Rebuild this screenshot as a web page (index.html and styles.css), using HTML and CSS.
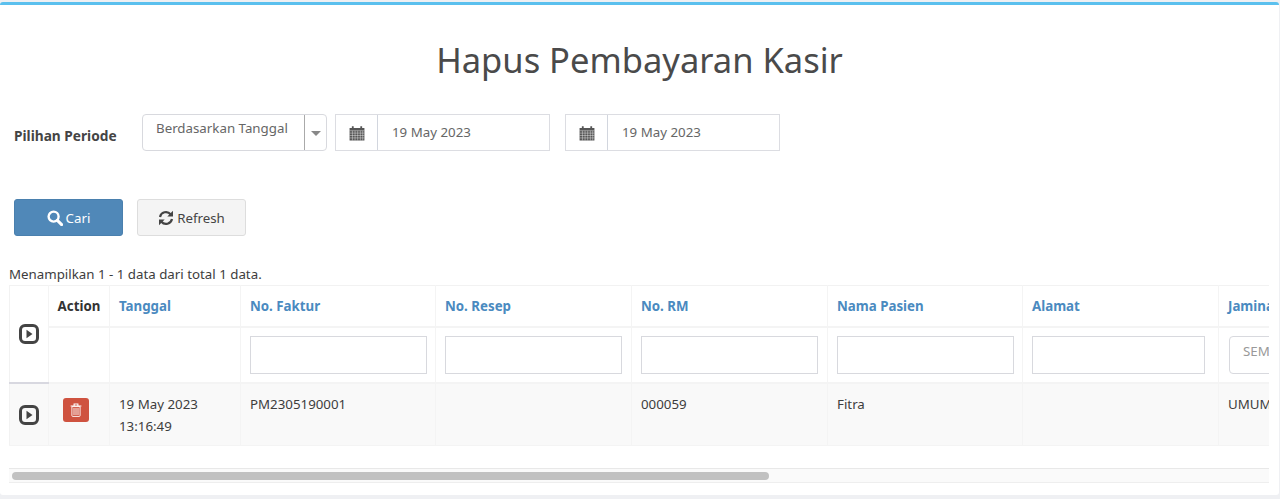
FILE: index.html
```html
<!DOCTYPE html>
<html lang="en">
<head>
  <meta charset="UTF-8" />
  <title>Hapus Pembayaran Kasir</title>
  <link rel="stylesheet" href="styles.css">
</head>
<body>
  <div class="box">
    <h1>Hapus Pembayaran Kasir</h1>

    <div class="filter-row">
      <label class="filter-label">Pilihan Periode</label>
      <div class="select-box">
        <span class="select-text">Berdasarkan Tanggal</span>
        <span class="select-arrow"><i class="caret"></i></span>
      </div>
      <div class="date-group">
        <span class="date-addon">
          <svg class="cal" viewBox="0 0 14 14"><path fill="#555" d="M.5 2.600h2V1h1.600v1.600h5.800V1h1.600v1.600h2v10.900H.5z"/><path stroke="#fff" stroke-width=".35" fill="none" d="M.5 5h13M.5 7.100h13M.5 9.200h13M.5 11.300h13M3 5v8.500M5.300 5v8.500M7.600 5v8.500M9.900 5v8.500M12 5v8.500"/></svg>
        </span>
        <span class="date-value">19 May 2023</span>
      </div>
      <div class="date-group">
        <span class="date-addon">
          <svg class="cal" viewBox="0 0 14 14"><path fill="#555" d="M.5 2.600h2V1h1.600v1.600h5.800V1h1.600v1.600h2v10.900H.5z"/><path stroke="#fff" stroke-width=".35" fill="none" d="M.5 5h13M.5 7.100h13M.5 9.200h13M.5 11.300h13M3 5v8.500M5.300 5v8.500M7.600 5v8.500M9.900 5v8.500M12 5v8.500"/></svg>
        </span>
        <span class="date-value">19 May 2023</span>
      </div>
    </div>

    <div class="button-row">
      <button class="btn btn-primary">
        <svg class="btn-icon" viewBox="0 0 16 16"><circle cx="6.600" cy="6.600" r="5" fill="none" stroke="#fff" stroke-width="2.400"/><path d="M10.400 10.400l4.200 4.200" stroke="#fff" stroke-width="3" stroke-linecap="round"/></svg>
        Cari
      </button>
      <button class="btn btn-default">
        <svg class="btn-icon" viewBox="0 0 16 16"><path fill="none" stroke="#444" stroke-width="2.200" d="M2 7A6.100 6.100 0 0 1 12.600 4.200M14 9A6.100 6.100 0 0 1 3.400 11.800"/><path fill="#444" d="M15 .8v5.700H9.300zM1 15.200V9.500h5.700z"/></svg>
        Refresh
      </button>
    </div>

    <p class="summary">Menampilkan 1 - 1 data dari total 1 data.</p>

    <div class="grid-wrap">
      <table class="grid">
        <colgroup>
          <col class="c-exp"><col class="c-act"><col class="c-tgl"><col class="c-fak"><col class="c-md"><col class="c-md"><col class="c-nam"><col class="c-md"><col class="c-jam">
        </colgroup>
        <thead>
          <tr class="head-row">
            <th rowspan="2" class="exp-head"><svg class="play" viewBox="0 0 20 20"><rect x="1.500" y="1.500" width="17" height="17" rx="4.500" fill="none" stroke="#444" stroke-width="3"/><path d="M7.500 5.800l6 4.200-6 4.200z" fill="#444"/></svg></th>
            <th class="plain">Action</th>
            <th>Tanggal</th>
            <th>No. Faktur</th>
            <th>No. Resep</th>
            <th>No. RM</th>
            <th>Nama Pasien</th>
            <th>Alamat</th>
            <th>Jaminan</th>
          </tr>
          <tr class="filter-cells">
            <td></td>
            <td></td>
            <td><input class="cell-input" type="text"></td>
            <td><input class="cell-input" type="text"></td>
            <td><input class="cell-input" type="text"></td>
            <td><input class="cell-input" type="text"></td>
            <td><input class="cell-input cell-input-alamat" type="text"></td>
            <td><div class="cell-select">SEMUA</div></td>
          </tr>
        </thead>
        <tbody>
          <tr class="data-row">
            <td class="exp-cell"><svg class="play" viewBox="0 0 20 20"><rect x="1.500" y="1.500" width="17" height="17" rx="4.500" fill="none" stroke="#444" stroke-width="3"/><path d="M7.500 5.800l6 4.200-6 4.200z" fill="#444"/></svg></td>
            <td class="act-cell">
              <span class="btn-del">
                <svg viewBox="0 0 12 14" class="trash"><path fill="none" stroke="#fff" stroke-width=".9" d="M1.900 3.600h8.200v9a.8.8 0 0 1-.8.8H2.700a.8.8 0 0 1-.8-.8z"/><path stroke="#fff" stroke-width=".9" fill="none" d="M4 5v7M6 5v7M8 5v7"/><path stroke="#fff" stroke-width="1.100" fill="none" d="M.6 3h10.800M4.100 2.800V1h3.800v1.800"/></svg>
              </span>
            </td>
            <td>19 May 2023<br>13:16:49</td>
            <td>PM2305190001</td>
            <td></td>
            <td>000059</td>
            <td>Fitra</td>
            <td></td>
            <td>UMUM</td>
          </tr>
        </tbody>
      </table>
    </div>

    <div class="scroll-track"><div class="scroll-thumb"></div></div>
  </div>
</body>
</html>
```

FILE: styles.css
```css
* {
  box-sizing: border-box;
}

html, body {
  height: 100%;
}

body {
  margin: 0;
  background: #eff0f3;
  font-family: "Noto Sans", "Open Sans", sans-serif;
  font-size: 13.3px;
  color: #3d3d3d;
  overflow: hidden;
}

.box {
  height: 493px;
  margin-right: 1px;
  margin-top: 2px;
  padding: 0 0 0 9px;
  background: #fff;
  border-top: 3px solid #5bc0ee;
  border-radius: 3px;
}

h1 {
  margin: 0;
  padding-top: 30px;
  text-align: center;
  font-size: 34.5px;
  line-height: 50px;
  font-weight: 400;
  color: #4a4a4a;
  margin-right: 9px;
}

/* filter row */
.filter-row {
  display: flex;
  align-items: flex-start;
  margin: 29px 0 0 5px;
}

.filter-label {
  width: 128px;
  padding-top: 12px;
  font-size: 13.7px;
  font-weight: 700;
  color: #444;
}

.select-box {
  display: flex;
  width: 185px;
  height: 37px;
  border: 1px solid #d8d9de;
  border-radius: 4px;
  margin-right: 8px;
}

.select-text {
  flex: 1;
  padding: 4px 0 0 13px;
  color: #666;
  border-right: 1px solid #aaa;
}

.select-arrow {
  width: 21px;
  display: flex;
  align-items: center;
  justify-content: center;
}

.caret {
  border-left: 5px solid transparent;
  border-right: 5px solid transparent;
  border-top: 5px solid #888;
  margin-top: 2px;
}

.date-group {
  display: flex;
  width: 215px;
  height: 37px;
  border: 1px solid #dcdde2;
  margin-right: 15px;
}

.date-addon {
  width: 42px;
  display: flex;
  align-items: center;
  justify-content: center;
  border-right: 1px solid #d2d6de;
}

.cal {
  width: 16px;
  height: 16px;
}

.date-value {
  padding: 8px 0 0 14px;
  color: #666;
}

/* buttons */
.button-row {
  display: flex;
  gap: 14px;
  margin: 48px 0 0 5px;
}

.btn {
  display: flex;
  align-items: center;
  justify-content: center;
  gap: 3px;
  width: 109px;
  height: 37px;
  border-radius: 3px;
  font-family: inherit;
  font-size: 13.3px;
  padding: 0;
}

.btn-primary {
  background: #5088b8;
  border: 1px solid #4a80ae;
  color: #fff;
}

.btn-default {
  background: #f4f4f4;
  border: 1px solid #ddd;
  color: #444;
}

.btn-icon {
  width: 16px;
  height: 16px;
}

.summary {
  margin: 29px 0 0;
  line-height: 18px;
}

/* table */
.grid-wrap {
  width: 1260px;
  overflow: hidden;
  margin-top: 2px;
}

.grid {
  border-collapse: collapse;
  table-layout: fixed;
  width: 1330px;
  border-left: 1px solid #f2f2f2;
  border-top: 1px solid #f2f2f2;
}

.c-exp { width: 39px; }
.c-act { width: 61px; }
.c-tgl { width: 131px; }
.c-fak { width: 195px; }
.c-md { width: 196px; }
.c-nam { width: 195px; }
.c-jam { width: 121px; }

.grid th,
.grid td {
  border: 1px solid #f4f4f4;
  border-width: 0 1px 1px 0;
  padding: 0 9px;
  text-align: left;
  vertical-align: top;
}

.head-row th {
  height: 41px;
  padding-top: 11px;
  font-weight: 700;
  color: #4a8ac0;
  border-bottom-width: 2px;
  white-space: nowrap;
}

.head-row th.plain {
  color: #333;
  text-align: center;
  padding-left: 0;
  padding-right: 0;
}

.exp-head {
  vertical-align: middle !important;
  text-align: center !important;
  padding: 0 !important;
  border-bottom: 2px solid #d8d8e0 !important;
}

.filter-cells td {
  height: 56px;
  padding-top: 8px;
  border-bottom-width: 2px;
}

.cell-input {
  display: block;
  width: 177px;
  height: 38px;
  border: 1px solid #d8d9de;
  background: #fff;
  margin: 0;
}

.cell-input-alamat {
  width: 173px;
}

.cell-select {
  width: 60px;
  height: 38px;
  margin-left: 1px;
  border: 1px solid #d8d9de;
  border-radius: 4px;
  padding: 5px 0 0 13px;
  color: #999;
  white-space: nowrap;
}

.data-row td {
  height: 63px;
  padding-top: 9px;
  background: #f9f9f9;
  line-height: 22px;
}

.data-row td.exp-cell {
  vertical-align: middle;
  text-align: center;
  padding: 0;
}

.data-row td.act-cell {
  text-align: center;
  padding: 14px 6px 0 0;
}

.play {
  display: inline-block;
  width: 20px;
  height: 20px;
  vertical-align: middle;
}

.btn-del {
  display: inline-flex;
  align-items: center;
  justify-content: center;
  width: 26px;
  height: 24px;
  background: #cf5340;
  border-radius: 3px;
}

.trash {
  width: 12px;
  height: 14px;
}

/* scrollbar */
.scroll-track {
  width: 1260px;
  height: 15px;
  margin-top: 22px;
  background: #fafafa;
  border-top: 1px solid #e8e8e8;
  border-bottom: 1px solid #eee;
  padding: 3px;
}

.scroll-thumb {
  width: 757px;
  height: 8px;
  border-radius: 4px;
  background: #c1c1c1;
}
```
